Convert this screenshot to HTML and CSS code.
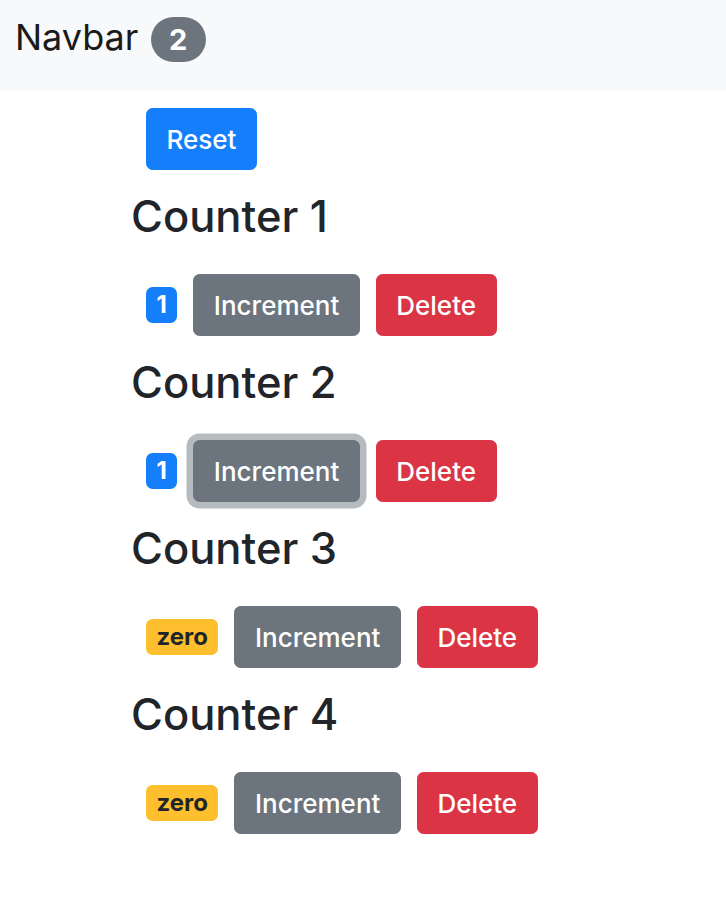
FILE: index.html
```html
<!DOCTYPE html>
<html lang="en">
<head>
<meta charset="utf-8">
<title>Counters</title>
<link rel="stylesheet" href="styles.css">
</head>
<body>
<nav class="navbar">
  <span class="brand">Navbar <span class="pill">2</span></span>
</nav>
<main class="main">
  <div class="reset-row">
    <button class="btn btn-primary">Reset</button>
  </div>
  <section class="counter">
    <h3 class="title">Counter 1</h3>
    <div class="row">
      <span class="badge badge-primary">1</span>
      <button class="btn btn-secondary">Increment</button>
      <button class="btn btn-danger">Delete</button>
    </div>
  </section>
  <section class="counter">
    <h3 class="title">Counter 2</h3>
    <div class="row">
      <span class="badge badge-primary">1</span>
      <button class="btn btn-secondary focus">Increment</button>
      <button class="btn btn-danger">Delete</button>
    </div>
  </section>
  <section class="counter">
    <h3 class="title">Counter 3</h3>
    <div class="row">
      <span class="badge badge-warning">zero</span>
      <button class="btn btn-secondary">Increment</button>
      <button class="btn btn-danger">Delete</button>
    </div>
  </section>
  <section class="counter">
    <h3 class="title">Counter 4</h3>
    <div class="row">
      <span class="badge badge-warning">zero</span>
      <button class="btn btn-secondary">Increment</button>
      <button class="btn btn-danger">Delete</button>
    </div>
  </section>
</main>
</body>
</html>
```

FILE: styles.css
```css
* { box-sizing: border-box; }
body {
  margin: 0;
  font-family: Inter, "Liberation Sans", Arial, sans-serif;
  color: #212529;
  background: #fff;
}
.navbar {
  height: 91px;
  background: #f8f9fa;
  padding: 8px 0 0 15px;
}
.brand {
  font-size: 36px;
  line-height: 58px;
  color: #1a1a1a;
}
.pill {
  display: inline-block;
  margin-left: 2px;
  font-size: 29px;
  font-weight: 700;
  line-height: 1;
  padding: 8px 18.5px;
  border-radius: 999px;
  background: #6c757d;
  color: #fff;
  vertical-align: baseline;
}
.main {
  padding-left: 131px;
}
.reset-row {
  padding: 17px 0 0 15px;
}
.btn {
  font-family: inherit;
  font-size: 26px;
  font-weight: 500;
  line-height: 40px;
  padding: 11px 19.5px 9px;
  border: 1px solid transparent;
  border-radius: 6.5px;
  color: #fff;
  cursor: pointer;
  margin: 0;
}
.btn-primary { background: #157ffb; border-color: #157ffb; }
.btn-secondary { background: #6c757d; border-color: #6c757d; }
.btn-danger { background: #db3545; border-color: #db3545; }
.btn.focus { box-shadow: 0 0 0 6.5px #b6bbbf; }
.counter {
  margin-top: 19px;
}
.title {
  margin: 0;
  font-size: 43.5px;
  font-weight: 500;
  line-height: 54px;
}
.row {
  margin-top: 31px;
  padding-left: 15px;
  display: flex;
  align-items: center;
  gap: 16px;
}
.badge {
  display: inline-block;
  font-size: 24px;
  font-weight: 700;
  line-height: 1;
  padding: 6px 10.5px;
  border-radius: 6.5px;
}
.badge-primary { background: #157ffb; color: #fff; }
.badge-warning { background: #fdbf2d; color: #212529; }
```
